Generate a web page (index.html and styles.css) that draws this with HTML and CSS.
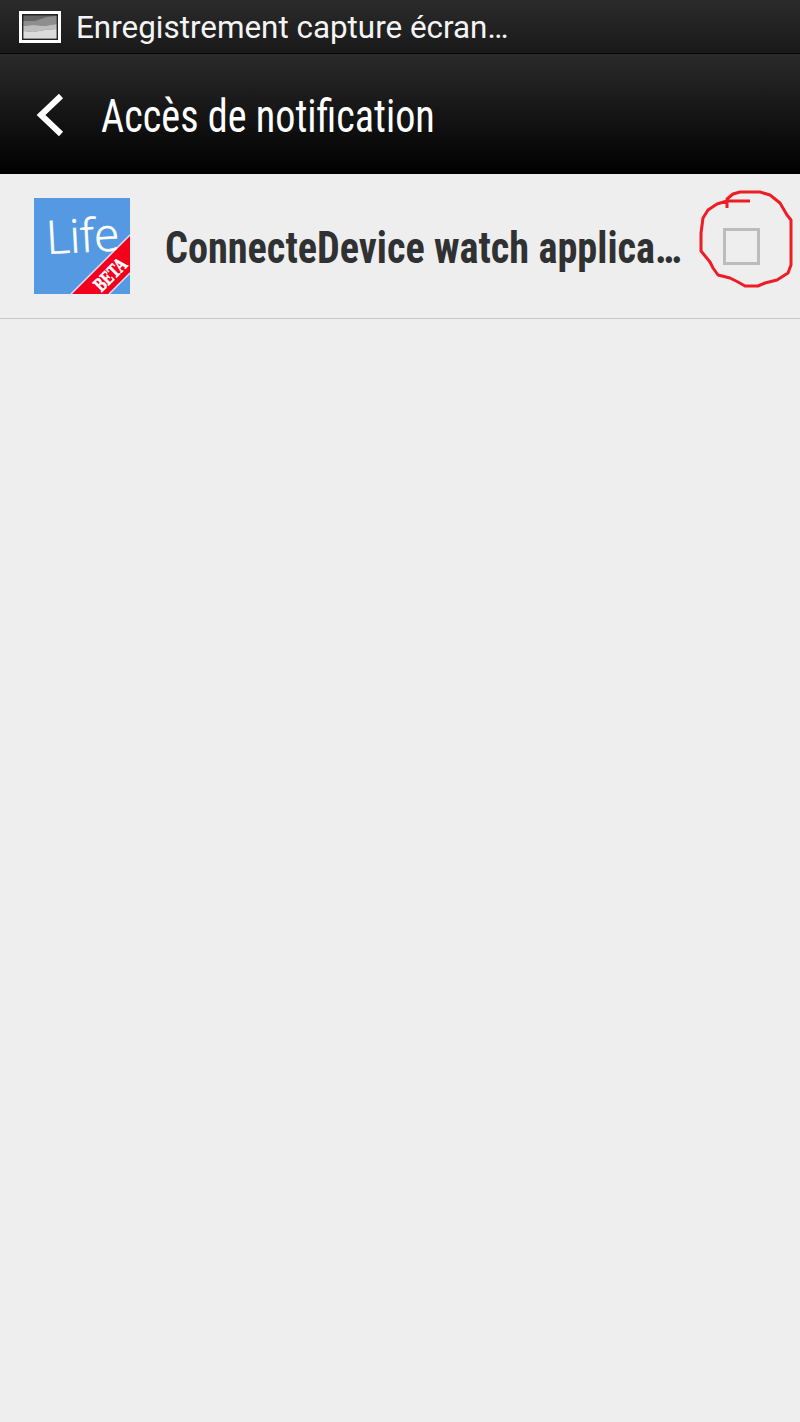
FILE: index.html
```html
<!DOCTYPE html>
<html lang="fr">
<head>
    <meta charset="UTF-8">
    <meta name="viewport" content="width=device-width, initial-scale=1.0">
    <title>Accès de notification</title>
    <link rel="stylesheet" href="styles.css">
</head>
<body>

    <div class="status-bar">
        <svg class="status-icon" width="42" height="32" viewBox="0 0 42 32">
            <rect x="1.5" y="1.5" width="39" height="29" fill="#222" stroke="#fff" stroke-width="3"/>
            <rect x="4.5" y="4.5" width="33" height="23" fill="#666"/>
            <path d="M4.5 10 L16 10 L28 6 L37.5 5 L37.5 13 L26 15 L14 14 L4.5 15 Z" fill="#8e8e8e"/>
            <path d="M4.5 15 L14 14 L26 15 L37.5 13 L37.5 18 L26 19 L14 21 L4.5 20 Z" fill="#bdbdbd"/>
            <path d="M4.5 20 L14 21 L26 19 L37.5 18 L37.5 27.5 L4.5 27.5 Z" fill="#dadada"/>
        </svg>
        <span class="status-text">Enregistrement capture écran…</span>
    </div>

    <div class="header">
        <svg class="back-icon" width="30" height="44" viewBox="0 0 30 44">
            <path d="M26 3 L6 22 L26 41" fill="none" stroke="#fff" stroke-width="6"/>
        </svg>
        <span class="header-title">Accès de notification</span>
    </div>

    <div class="row">
        <svg class="app-icon" width="96" height="96" viewBox="0 0 96 96">
            <rect width="96" height="96" fill="#5499e2"/>
            <polygon points="96,37 96,75 75,96 37,96" fill="#f5001c"/>
            <path d="M96 37 L37 96 M96 75 L75 96" stroke="#cfe2f7" stroke-width="1.5"/>
            <text class="life-text" transform="translate(13 56) rotate(-3)">Life</text>
            <text class="beta-text" transform="translate(81 81) rotate(-45)" text-anchor="middle" textLength="38" lengthAdjust="spacingAndGlyphs">BETA</text>
        </svg>
        <span class="row-title">ConnecteDevice watch applica…</span>
        <div class="checkbox"></div>
        <!-- red circle drawn on the screenshot -->
        <svg class="scribble" width="120" height="150" viewBox="0 0 120 150">
            <path d="M47 33 L47 24 L53 19 L60 17 L80 17 L90 20 L100 28 L107 40 L111 45 L111 90 L108 98 L97 105 L85 108 L78 111 L65 111 L58 107 L50 103 L38 100 L33 93 L30 87 L21 76 L21 58 L23 43 L28 35 L37 29 L47 26 L70 26" fill="none" stroke="#ee1c24" stroke-width="3" stroke-linejoin="round"/>
        </svg>
    </div>

</body>
</html>
```

FILE: styles.css
```css
body {
    margin: 0;
    height: 1422px;
    overflow: hidden;
    background-color: #eeeeee;
    font-family: Roboto, sans-serif;
}

.status-bar {
    height: 53px;
    display: flex;
    align-items: center;
    padding-left: 19px;
    background: linear-gradient(#2b2b2b, #191919);
    border-bottom: 1px solid #050505;
    color: #f4f4f4;
}

.status-icon {
    margin-right: 15px;
}

.status-text {
    font-size: 31.4px;
    margin-top: 2px;
    white-space: nowrap;
}

.header {
    height: 120px;
    display: flex;
    align-items: center;
    padding-left: 35px;
    background: linear-gradient(#2a2a2a, #000000);
    color: #ffffff;
}

.back-icon {
    margin-top: 2px;
    margin-right: 36px;
}

.header-title {
    font-size: 46px;
    font-stretch: 75%;
    margin-top: 4px;
    white-space: nowrap;
    transform: scaleX(0.874);
    transform-origin: left;
}

.row {
    position: relative;
    height: 144px;
    display: flex;
    align-items: center;
    padding-left: 34px;
    border-bottom: 1px solid #c6c6c6;
}

.app-icon {
    margin-right: 35px;
}

.life-text {
    font-family: "Open Sans", sans-serif;
    font-weight: 300;
    font-size: 46px;
    fill: #ffffff;
    stroke: #ffffff;
    stroke-width: 0.6px;
}

.beta-text {
    font-family: "Liberation Serif", serif;
    font-weight: bold;
    font-size: 20px;
    fill: #ffffff;
    stroke: #ffffff;
    stroke-width: 0.7px;
}

.row-title {
    font-size: 44px;
    font-weight: 700;
    font-stretch: 75%;
    margin-top: 3px;
    color: #303133;
    white-space: nowrap;
    transform: scaleX(0.915);
    transform-origin: left;
}

.checkbox {
    position: absolute;
    right: 40px;
    width: 31px;
    height: 31px;
    border: 3px solid #bcbcbc;
}

.scribble {
    position: absolute;
    top: 1px;
    right: 0;
}
```
